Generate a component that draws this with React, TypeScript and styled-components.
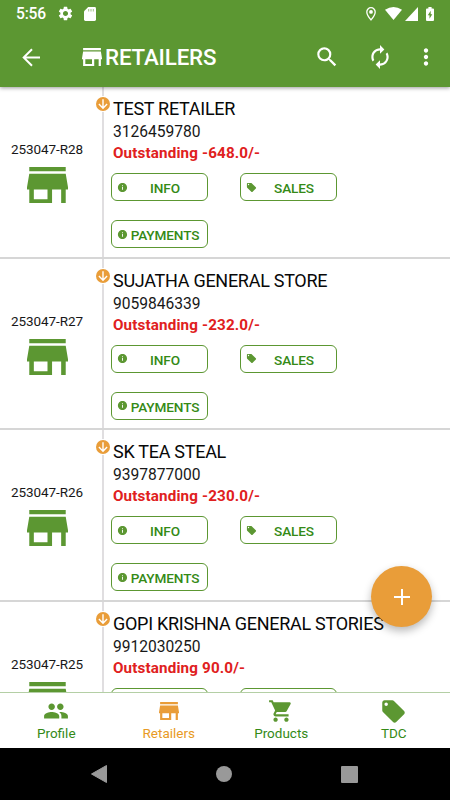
import React from "react";
import styled, { createGlobalStyle } from "styled-components";
import {
  MdSearch, MdAutorenew, MdMoreVert, MdSettings, MdPeople,
  MdShoppingCart, MdLocalOffer, MdInfo,
} from "react-icons/md";

const green = "#5c9732";
const textGreen = "#348a16";
const orange = "#e99d39";

const GlobalStyle = createGlobalStyle`
  * { box-sizing: border-box; }
  body { margin: 0; background: #fff; font-family: Roboto, sans-serif; }
  svg { display: block; flex: none; }
  button { font-family: inherit; padding: 0; background: none; border: 0; color: inherit; }
`;

const Screen = styled.div`
  position: relative;
  display: flex;
  flex-direction: column;
  width: 450px;
  height: 800px;
  overflow: hidden;
`;
const Header = styled.header`
  position: relative;
  z-index: 1;
  flex: none;
  height: 87px;
  background: ${green};
  color: #fff;
  box-shadow: 0 1px 4px rgba(0, 0, 0, 0.4);
`;
const StatusBar = styled.div`
  display: flex;
  align-items: center;
  height: 27px;
  padding: 0 16px 0 16px;
`;
const Clock = styled.span`
  width: 41px;
  font-size: 15.6px;
  font-weight: 500;
  letter-spacing: -0.2px;
  line-height: 27px;
  padding-top: 1px;
`;
const StatusIcons = styled.div`
  display: flex;
  align-items: center;
  margin-left: auto;
`;
const Gap = styled.span<{ $w: number }>`
  width: ${(p) => p.$w}px;
  flex: none;
`;
const Toolbar = styled.div`
  display: flex;
  align-items: center;
  height: 60px;
  padding: 0 11px 0 22px;
`;
const Title = styled.h1`
  margin: 0 auto 0 3px;
  padding-bottom: 1px;
  font-size: 22.3px;
  font-weight: 500;
  letter-spacing: -0.15px;
  line-height: 26px;
`;
const List = styled.main`
  flex: 1;
  min-height: 0;
  overflow: hidden;
  background: #fff;
`;
const Row = styled.article`
  display: flex;
  height: 171.7px;
  border-bottom: 2px solid #d6d6d6;
`;
const Identity = styled.div`
  position: relative;
  display: flex;
  flex-direction: column;
  align-items: center;
  width: 104px;
  padding: 54px 8px 0 0;
  border-right: 2px solid #e0dee0;
  color: ${green};
`;
const Code = styled.span`
  height: 26px;
  color: #181818;
  font-size: 13.5px;
  letter-spacing: -0.08px;
  line-height: 17px;
  white-space: nowrap;
`;
const Badge = styled.span`
  position: absolute;
  top: 9px;
  right: -9px;
  padding: 1px;
  border-radius: 50%;
  background: #fff;
`;
const Details = styled.div`
  flex: 1;
  padding: 10px 0 0 9px;
`;
const Name = styled.h2`
  margin: 0;
  font-size: 18px;
  font-weight: 400;
  letter-spacing: -0.28px;
  line-height: 23px;
  color: #080808;
  white-space: nowrap;
`;
const Phone = styled.div`
  padding-top: 2px;
  font-size: 15.6px;
  line-height: 21px;
  color: #181818;
`;
const Outstanding = styled.div`
  margin-top: -1px;
  font-size: 15.2px;
  font-weight: 700;
  letter-spacing: 0.15px;
  line-height: 22px;
  color: #e02020;
`;
const Actions = styled.div`
  display: grid;
  grid-template-columns: 97px 97px;
  column-gap: 32px;
  row-gap: 19px;
  margin: 9px 0 0 -2px;
`;
const Action = styled.button`
  display: flex;
  align-items: center;
  height: 28px;
  padding-left: 5px;
  border: 1px solid ${green};
  border-radius: 6px;
  color: ${green};
`;
const ActionLabel = styled.span`
  flex: 1;
  padding: 2px 5px 0 0;
  color: ${textGreen};
  font-size: 13.6px;
  font-weight: 500;
  letter-spacing: -0.12px;
  text-align: center;
`;
const Fab = styled.button`
  position: absolute;
  z-index: 2;
  left: 371px;
  top: 566px;
  display: flex;
  align-items: center;
  justify-content: center;
  width: 61px;
  height: 61px;
  border-radius: 50%;
  background: ${orange};
  color: #fff;
  box-shadow: 0 4px 8px rgba(0, 0, 0, 0.28);
`;
const Tabs = styled.nav`
  display: grid;
  grid-template-columns: repeat(4, 1fr);
  flex: none;
  height: 56px;
  border-top: 1px solid #b4cfa5;
  background: #fff;
`;
const Tab = styled.button<{ $active?: boolean }>`
  display: flex;
  flex-direction: column;
  align-items: center;
  color: ${(p) => (p.$active ? orange : green)};
`;
const TabIcon = styled.span`
  display: flex;
  align-items: center;
  height: 31px;
  padding-top: 5px;
`;
const TabLabel = styled.span<{ $active?: boolean }>`
  font-size: 13.5px;
  line-height: 18px;
  color: ${(p) => (p.$active ? "#e89a24" : textGreen)};
`;
const SystemNav = styled.footer`
  display: flex;
  align-items: center;
  justify-content: space-between;
  flex: none;
  height: 52px;
  padding: 0 92px 0 91px;
  background: #000;
`;

const StoreIcon = ({ w, h }: { w: number; h: number }) => (
  <svg width={w} height={h} viewBox="3 4 18 16" preserveAspectRatio="none" fill="currentColor">
    <path d="M20 4H4v1.900h16V4zm1 10v-1l-1-6H4l-1 6v1h1v6h10v-6h4v6h2v-6h1zm-9 4.300H6V14h6v4.300z" />
  </svg>
);

const BackArrow = () => (
  <svg width="19" height="19" viewBox="0 0 19 19" fill="none" stroke="#fff" strokeWidth="2">
    <path d="M18 9.500H1.500M10 1.200 1.700 9.500 10 17.800" />
  </svg>
);

const Plus = () => (
  <svg width="16" height="16" viewBox="0 0 16 16" stroke="#fff" strokeWidth="2">
    <path d="M8 0v16M0 8h16" />
  </svg>
);

const DownBadge = () => (
  <svg width="14" height="14" viewBox="0 0 14 14" fill="none">
    <circle cx="7" cy="7" r="7" fill={orange} />
    <path d="M7 2.2v9M2.9 7.1 7 11.2l4.1-4.1" stroke="#fff" strokeWidth="1.4" />
  </svg>
);

const SdCard = () => (
  <svg width="12" height="14" viewBox="0 0 12 14">
    <path d="M4.2 0H10.6Q12 0 12 1.4V12.6Q12 14 10.6 14H1.4Q0 14 0 12.6V4.2Z" fill="#fff" />
    <path d="M4.7 2v2.500M7 2v2.500M9.3 2v2.500" stroke={green} strokeWidth="0.6" />
  </svg>
);

const Pin = () => (
  <svg width="10" height="14" viewBox="0 0 10 14" fill="none">
    <path d="M5 .7A4.2 4.2 0 0 0 .8 4.9C.8 8 5 12.9 5 12.9S9.2 8 9.2 4.9A4.2 4.2 0 0 0 5 .7Z" stroke="#fff" strokeWidth="1.3" />
    <circle cx="5" cy="4.9" r="1.9" fill="#fff" />
  </svg>
);

const Wifi = () => (
  <svg width="17" height="13" viewBox="0 0 17 13">
    <path d="M0 2.8Q8.5-2.8 17 2.8L8.5 13Z" fill="#fff" />
  </svg>
);

const Signal = () => (
  <svg width="13" height="14" viewBox="0 0 13 14">
    <path d="M13 0v14H0Z" fill="#fff" />
  </svg>
);

const Battery = () => (
  <svg width="8" height="14" viewBox="0 0 8 14">
    <path d="M2.4 0h3.2v1.4H7q1 0 1 1V13q0 1-1 1H1q-1 0-1-1V2.400q0-1 1-1h1.400Z" fill="#fff" />
    <path d="M4.700 3.800 1.800 8.300h1.700V11.700L6.300 7.200H4.700Z" fill={green} />
  </svg>
);

const retailers = [
  { code: "253047-R28", name: "TEST RETAILER", phone: "3126459780", due: "-648.0" },
  { code: "253047-R27", name: "SUJATHA GENERAL STORE", phone: "9059846339", due: "-232.0" },
  { code: "253047-R26", name: "SK TEA STEAL", phone: "9397877000", due: "-230.0" },
  { code: "253047-R25", name: "GOPI KRISHNA GENERAL STORIES", phone: "9912030250", due: "90.0" },
];

const actions = [
  { label: "INFO", icon: <MdInfo size={11} /> },
  { label: "SALES", icon: <MdLocalOffer size={11} /> },
  { label: "PAYMENTS", icon: <MdInfo size={11} /> },
];

const tabs = [
  { label: "Profile", icon: <MdPeople size={26} /> },
  { label: "Retailers", icon: <StoreIcon w={20} h={18} />, active: true },
  { label: "Products", icon: <MdShoppingCart size={26} /> },
  { label: "TDC", icon: <MdLocalOffer size={27} /> },
];

export default function App() {
  return (
    <>
      <GlobalStyle />
      <Screen>
        <Header>
          <StatusBar>
            <Clock>5:56</Clock>
            <MdSettings size={17} />
            <Gap $w={10} />
            <SdCard />
            <StatusIcons>
              <Pin />
              <Gap $w={9} />
              <Wifi />
              <Gap $w={3} />
              <Signal />
              <Gap $w={8} />
              <Battery />
            </StatusIcons>
          </StatusBar>
          <Toolbar>
            <BackArrow />
            <Gap $w={41} />
            <StoreIcon w={20} h={18} />
            <Title>RETAILERS</Title>
            <MdSearch size={26} />
            <Gap $w={27} />
            <MdAutorenew size={26} />
            <Gap $w={20} />
            <MdMoreVert size={26} />
          </Toolbar>
        </Header>
        <List>
          {retailers.map((r) => (
            <Row key={r.code}>
              <Identity>
                <Code>{r.code}</Code>
                <StoreIcon w={41} h={36} />
                <Badge><DownBadge /></Badge>
              </Identity>
              <Details>
                <Name>{r.name}</Name>
                <Phone>{r.phone}</Phone>
                <Outstanding>Outstanding {r.due}/-</Outstanding>
                <Actions>
                  {actions.map((a) => (
                    <Action key={a.label}>
                      {a.icon}
                      <ActionLabel>{a.label}</ActionLabel>
                    </Action>
                  ))}
                </Actions>
              </Details>
            </Row>
          ))}
        </List>
        <Tabs>
          {tabs.map((t) => (
            <Tab key={t.label} $active={t.active}>
              <TabIcon>{t.icon}</TabIcon>
              <TabLabel $active={t.active}>{t.label}</TabLabel>
            </Tab>
          ))}
        </Tabs>
        <SystemNav>
          <svg width="16" height="18" viewBox="0 0 16 18"><path d="M15.500.500v17L.5 9Z" fill="#999" stroke="#999" strokeLinejoin="round" /></svg>
          <svg width="16" height="16" viewBox="0 0 16 16"><circle cx="8" cy="8" r="8" fill="#999" /></svg>
          <svg width="17" height="17" viewBox="0 0 17 17"><rect width="17" height="17" rx="1" fill="#999" /></svg>
        </SystemNav>
        <Fab aria-label="Add"><Plus /></Fab>
      </Screen>
    </>
  );
}
